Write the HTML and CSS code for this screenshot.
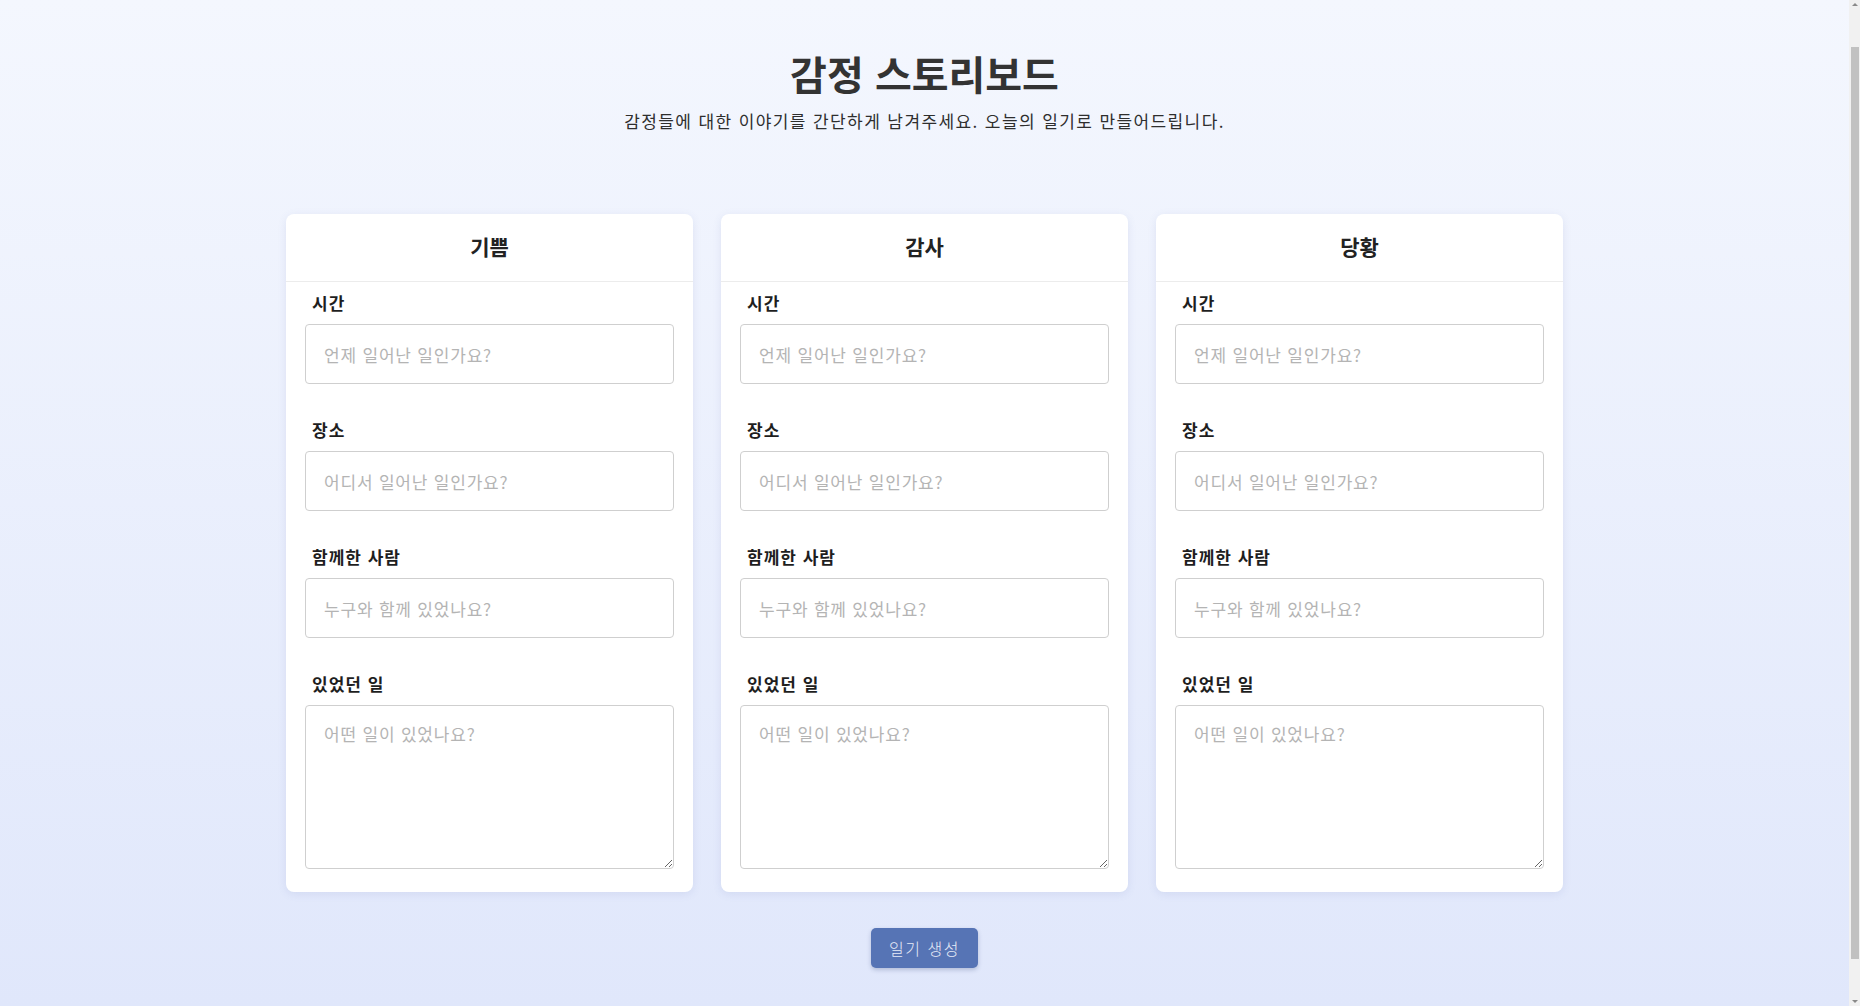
FILE: index.html
```html
<!DOCTYPE html>
<html lang="ko">
<head>
<meta charset="utf-8">
<title>감정 스토리보드</title>
<link rel="stylesheet" href="styles.css">
</head>
<body>
<main class="page">
  <header class="intro">
    <h1 class="title">감정 스토리보드</h1>
    <p class="subtitle">감정들에 대한 이야기를 간단하게 남겨주세요. 오늘의 일기로 만들어드립니다.</p>
  </header>

  <section class="board">
    <article class="card">
      <h2 class="card-title">기쁨</h2>
      <div class="card-body">
        <div class="field">
          <label class="label">시간</label>
          <input class="input" type="text" placeholder="언제 일어난 일인가요?">
        </div>
        <div class="field">
          <label class="label">장소</label>
          <input class="input" type="text" placeholder="어디서 일어난 일인가요?">
        </div>
        <div class="field">
          <label class="label">함께한 사람</label>
          <input class="input" type="text" placeholder="누구와 함께 있었나요?">
        </div>
        <div class="field">
          <label class="label">있었던 일</label>
          <textarea class="input area" placeholder="어떤 일이 있었나요?"></textarea>
        </div>
      </div>
    </article>

    <article class="card">
      <h2 class="card-title">감사</h2>
      <div class="card-body">
        <div class="field">
          <label class="label">시간</label>
          <input class="input" type="text" placeholder="언제 일어난 일인가요?">
        </div>
        <div class="field">
          <label class="label">장소</label>
          <input class="input" type="text" placeholder="어디서 일어난 일인가요?">
        </div>
        <div class="field">
          <label class="label">함께한 사람</label>
          <input class="input" type="text" placeholder="누구와 함께 있었나요?">
        </div>
        <div class="field">
          <label class="label">있었던 일</label>
          <textarea class="input area" placeholder="어떤 일이 있었나요?"></textarea>
        </div>
      </div>
    </article>

    <article class="card">
      <h2 class="card-title">당황</h2>
      <div class="card-body">
        <div class="field">
          <label class="label">시간</label>
          <input class="input" type="text" placeholder="언제 일어난 일인가요?">
        </div>
        <div class="field">
          <label class="label">장소</label>
          <input class="input" type="text" placeholder="어디서 일어난 일인가요?">
        </div>
        <div class="field">
          <label class="label">함께한 사람</label>
          <input class="input" type="text" placeholder="누구와 함께 있었나요?">
        </div>
        <div class="field">
          <label class="label">있었던 일</label>
          <textarea class="input area" placeholder="어떤 일이 있었나요?"></textarea>
        </div>
      </div>
    </article>
  </section>

  <div class="actions">
    <button class="btn" type="button">일기 생성</button>
  </div>
</main>

<div class="scrollbar" aria-hidden="true">
  <span class="sb-arrow sb-up"></span>
  <span class="sb-thumb"></span>
  <span class="sb-arrow sb-down"></span>
</div>
</body>
</html>
```

FILE: styles.css
```css
* { box-sizing: border-box; }

html, body {
  margin: 0;
  padding: 0;
}

body {
  font-family: "Noto Sans CJK KR", "Noto Sans", sans-serif;
  color: #2b2b2b;
  background: linear-gradient(180deg, #f4f7fe 0%, #e0e7fb 100%);
  min-height: 1006px;
  overflow: hidden;
}

.page {
  display: flex;
  flex-direction: column;
  align-items: center;
  padding: 49px 11px 30px 0;
}

.intro {
  text-align: center;
}

.title {
  margin: 0;
  font-size: 40px;
  line-height: 48px;
  font-weight: 700;
  color: #333;
}

.subtitle {
  margin: 12px 0 0;
  font-size: 17px;
  line-height: 24px;
  letter-spacing: 1.4px;
  color: #2e2e2e;
}

.board {
  margin-top: 81px;
  display: grid;
  grid-template-columns: repeat(3, 407px);
  gap: 28px;
}

.card {
  background: #fff;
  border-radius: 8px;
  box-shadow: 0 2px 8px rgba(90, 110, 170, 0.12);
}

.card-title {
  margin: 0;
  height: 68px;
  padding-bottom: 3px;
  display: flex;
  align-items: center;
  justify-content: center;
  font-size: 21px;
  font-weight: 700;
  color: #222;
  border-bottom: 1px solid #ececec;
}

.card-body {
  padding: 9px 19px 23px;
  display: flex;
  flex-direction: column;
  gap: 34px;
}

.field {
  display: flex;
  flex-direction: column;
}

.label {
  padding-left: 7px;
  font-size: 17px;
  line-height: 24px;
  font-weight: 700;
  letter-spacing: 1px;
  color: #1e1e1e;
  margin-bottom: 9px;
}

.input {
  width: 100%;
  height: 60px;
  border: 1px solid #cfcfcf;
  border-radius: 4px;
  padding: 0 18px;
  font-family: "Noto Sans CJK KR", "Noto Sans", sans-serif;
  font-size: 17px;
  letter-spacing: 0.8px;
  color: #333;
  background: #fff;
  outline: none;
}

.input::placeholder {
  color: #b4b4b4;
}

.area {
  height: 164px;
  padding: 16px 18px;
  resize: vertical;
  line-height: 24px;
}

.actions {
  margin-top: 36px;
  display: flex;
  justify-content: center;
}

.btn {
  width: 107px;
  height: 40px;
  border: none;
  border-radius: 5px;
  background: #5674b5;
  color: #e6ebf7;
  font-family: "Noto Sans CJK KR", "Noto Sans", sans-serif;
  font-size: 16px;
  font-weight: 300;
  letter-spacing: 1.5px;
  box-shadow: 0 2px 4px rgba(40, 60, 110, 0.25);
  cursor: pointer;
}

.scrollbar {
  position: fixed;
  top: 0;
  right: 0;
  bottom: 0;
  width: 11px;
  background: #f1f1f1;
  display: flex;
  flex-direction: column;
  align-items: center;
  padding: 0 1px 0 2px;
}

.sb-arrow {
  flex: 0 0 auto;
  width: 0;
  height: 0;
  border-left: 3px solid transparent;
  border-right: 3px solid transparent;
  margin: 3px 0;
}

.sb-up { border-bottom: 3px solid #8a8a8a; }
.sb-down { border-top: 3px solid #8a8a8a; }

.sb-thumb {
  flex: 1;
  width: 100%;
  margin: 38px 0 38px;
  background: #c1c1c1;
}
```
